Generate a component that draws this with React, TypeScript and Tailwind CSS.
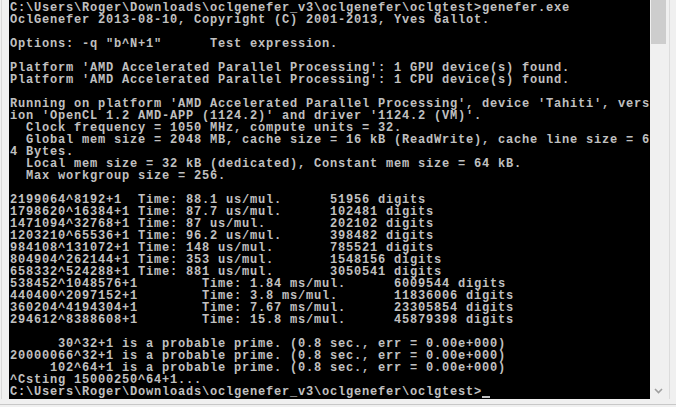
const lines: string[] = [
  "C:\\Users\\Roger\\Downloads\\oclgenefer_v3\\oclgenefer\\oclgtest>genefer.exe",
  "OclGenefer 2013-08-10, Copyright (C) 2001-2013, Yves Gallot.",
  "",
  'Options: -q "b^N+1"      Test expression.',
  "",
  "Platform 'AMD Accelerated Parallel Processing': 1 GPU device(s) found.",
  "Platform 'AMD Accelerated Parallel Processing': 1 CPU device(s) found.",
  "",
  "Running on platform 'AMD Accelerated Parallel Processing', device 'Tahiti', vers",
  "ion 'OpenCL 1.2 AMD-APP (1124.2)' and driver '1124.2 (VM)'.",
  "  Clock frequency = 1050 MHz, compute units = 32.",
  "  Global mem size = 2048 MB, cache size = 16 kB (ReadWrite), cache line size = 6",
  "4 Bytes.",
  "  Local mem size = 32 kB (dedicated), Constant mem size = 64 kB.",
  "  Max workgroup size = 256.",
  "",
  "2199064^8192+1  Time: 88.1 us/mul.      51956 digits",
  "1798620^16384+1 Time: 87.7 us/mul.      102481 digits",
  "1471094^32768+1 Time: 87 us/mul.        202102 digits",
  "1203210^65536+1 Time: 96.2 us/mul.      398482 digits",
  "984108^131072+1 Time: 148 us/mul.       785521 digits",
  "804904^262144+1 Time: 353 us/mul.       1548156 digits",
  "658332^524288+1 Time: 881 us/mul.       3050541 digits",
  "538452^1048576+1        Time: 1.84 ms/mul.      6009544 digits",
  "440400^2097152+1        Time: 3.8 ms/mul.       11836006 digits",
  "360204^4194304+1        Time: 7.67 ms/mul.      23305854 digits",
  "294612^8388608+1        Time: 15.8 ms/mul.      45879398 digits",
  "",
  "      30^32+1 is a probable prime. (0.8 sec., err = 0.00e+000)",
  "20000066^32+1 is a probable prime. (0.8 sec., err = 0.00e+000)",
  "     102^64+1 is a probable prime. (0.8 sec., err = 0.00e+000)",
  "^Csting 15000250^64+1...",
];

const prompt = "C:\\Users\\Roger\\Downloads\\oclgenefer_v3\\oclgenefer\\oclgtest>";

export default function App() {
  return (
    <div className="w-[676px] h-[407px] bg-[#f0f0f0] flex flex-col overflow-hidden">
      <div className="flex h-[399px]">
        {/* left window edge */}
        <div className="w-[9px] flex">
          <div className="w-[1px]" />
          <div className="w-[1px] bg-[#d8d8d8]" />
        </div>

        {/* console, 80 cols x 8px */}
        <div
          className="w-[641px] bg-black pt-[2px] pl-[1px] text-[#c0c0c0] font-bold overflow-hidden"
          style={{ fontFamily: '"Liberation Mono", "DejaVu Sans Mono", monospace' }}
        >
          {lines.map((l, i) => (
            <div key={i} className="h-[12px] leading-[12px] text-[12px] tracking-[0.8px] whitespace-pre">
              {l}
            </div>
          ))}
          <div className="h-[12px] leading-[12px] text-[12px] tracking-[0.8px] whitespace-pre flex">
            <span>{prompt}</span>
            <span className="w-[8px] h-[12px] flex flex-col justify-end">
              <span className="h-[2px] bg-[#c0c0c0]" />
            </span>
          </div>
        </div>

        {/* scrollbar */}
        <div className="w-[17px] bg-[#f0f0f0] flex flex-col justify-between">
          <div className="mx-[1px] h-[44px] bg-[#cdcdcd]" />
          <div className="h-[17px] flex items-center justify-center">
            <svg width="9" height="6" viewBox="0 0 9 6">
              <path d="M1 1 L4.5 4.5 L8 1" fill="none" stroke="#a0a0a0" strokeWidth="1.6" />
            </svg>
          </div>
        </div>

        {/* right window edge */}
        <div className="w-[9px] flex">
          <div className="w-[2px]" />
          <div className="w-[1px] bg-[#dcdcdc]" />
        </div>
      </div>
      <div className="h-[5px]" />
      <div className="h-[1px] bg-[#c8c8c8]" />
    </div>
  );
}
